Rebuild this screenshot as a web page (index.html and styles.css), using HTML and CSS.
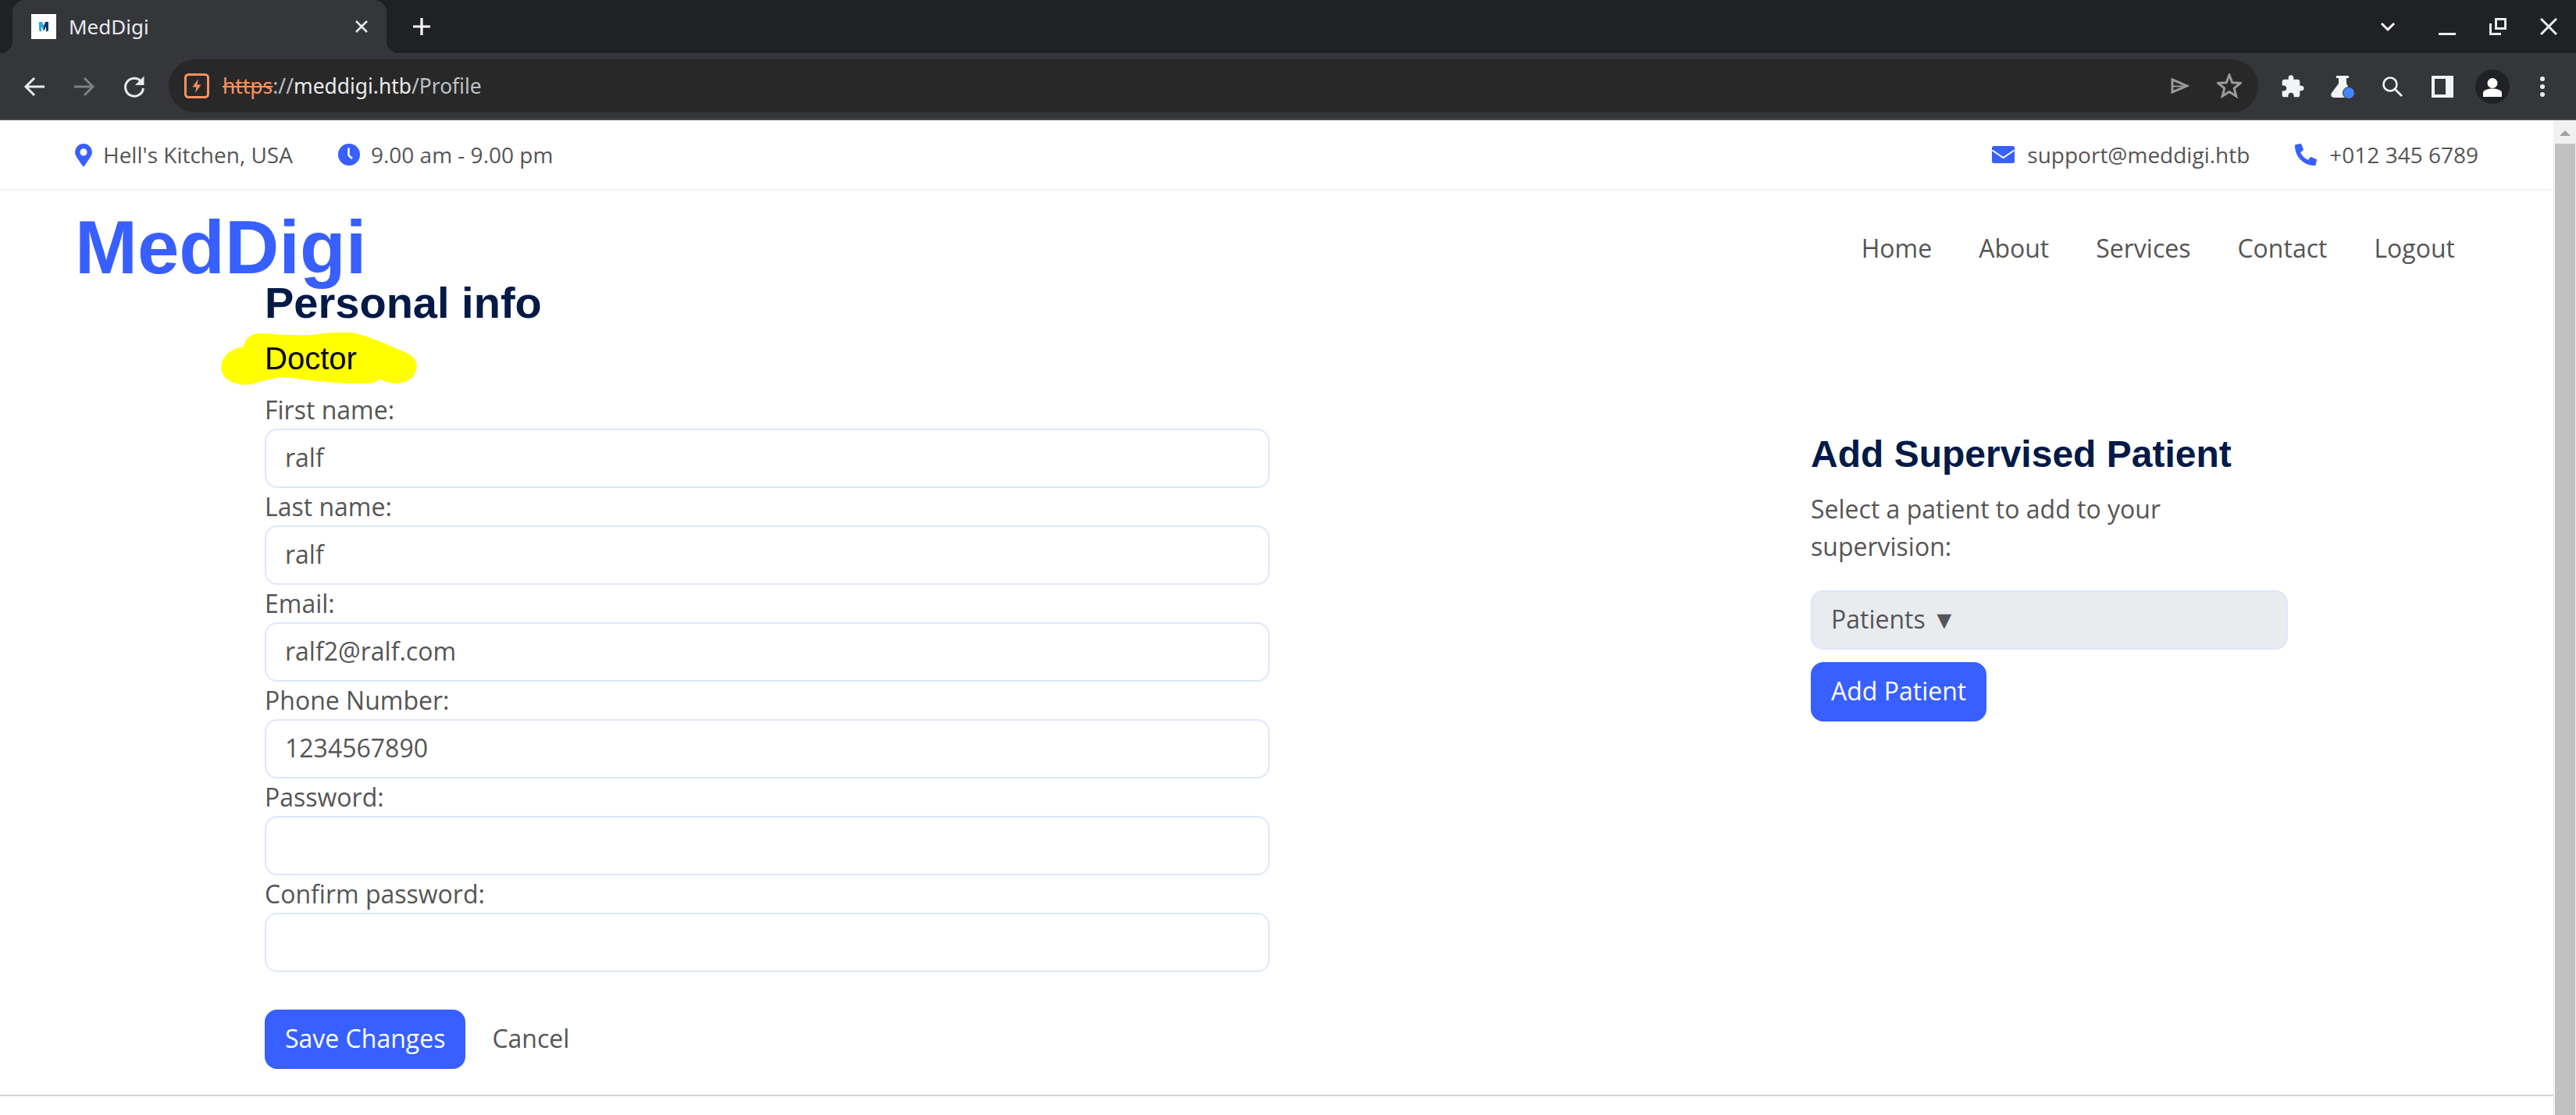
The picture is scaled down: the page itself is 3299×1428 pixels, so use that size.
FILE: index.html
```html
<!DOCTYPE html>
<html lang="en">
<head>
  <meta charset="UTF-8" />
  <title>MedDigi</title>
  <link rel="stylesheet" href="styles.css">
</head>
<body>
  <!-- BROWSER FRAME -->
  <div class="tabstrip">
    <div class="tab">
      <svg class="favicon" viewBox="0 0 32 32">
        <rect width="32" height="32" fill="#fff"/>
        <polygon points="10,10 14,10 16,15 16,22 13,16 13,23 10,21" fill="#29a9d8"/>
        <polygon points="22,10 18,10 16,15 16,22 19,16 19,23 22,21" fill="#123a6b"/>
      </svg>
      <span class="tab-title">MedDigi</span>
      <svg class="tab-close" viewBox="0 0 20 20"><path d="M3 3L17 17M17 3L3 17" stroke="#e8eaed" stroke-width="2.6"/></svg>
    </div>
    <svg class="new-tab" viewBox="0 0 24 24"><path d="M12 1V23M1 12H23" stroke="#fff" stroke-width="3.2"/></svg>
    <div class="window-btns">
      <svg class="win-chevron" viewBox="0 0 20 14"><path d="M2 2L10 10L18 2" fill="none" stroke="#fff" stroke-width="3"/></svg>
      <svg class="win-icon" viewBox="0 0 22 22"><rect y="19" width="22" height="3" fill="#e8eaed"/></svg>
      <svg class="win-icon" viewBox="0 0 22 22"><path d="M8.500 1.500H20.500V13.500H8.500Z" fill="none" stroke="#e8eaed" stroke-width="3"/><path d="M1.500 7V20.500H15" fill="none" stroke="#e8eaed" stroke-width="3"/></svg>
      <svg class="win-icon" viewBox="0 0 22 22"><path d="M1 1L21 21M21 1L1 21" stroke="#e8eaed" stroke-width="3"/></svg>
    </div>
  </div>

  <div class="toolbar">
    <div class="tool-group">
      <span class="tool"><svg viewBox="0 0 32 32"><path d="M29 16H5M16 5L5 16L16 27" fill="none" stroke="#e8eaed" stroke-width="3"/></svg></span>
      <span class="tool"><svg viewBox="0 0 32 32"><path d="M3 16H27M16 5L27 16L16 27" fill="none" stroke="#7f8083" stroke-width="3"/></svg></span>
      <span class="tool"><svg viewBox="0 0 32 32"><path d="M25 9.500A11.500 11.500 0 1 0 27.500 18" fill="none" stroke="#e8eaed" stroke-width="3"/><path d="M28.500 2.500V14H17Z" fill="#e8eaed"/></svg></span>
    </div>
    <div class="omnibox">
      <svg class="warn-icon" viewBox="0 0 32 32">
        <rect x="1.500" y="1.500" width="29" height="29" rx="4" fill="none" stroke="#f9915f" stroke-width="3"/>
        <path d="M18 7L10.500 17.500H15.500L14 25L21.500 14.500H16.500Z" fill="#f9915f"/>
      </svg>
      <span class="url"><span class="url-https">https</span><span class="url-dim">://</span><span class="url-host">meddigi.htb</span><span class="url-dim">/Profile</span></span>
      <svg class="omni-send" viewBox="0 0 24 20"><path d="M2 2L21 10L2 18Z" fill="none" stroke="#9a9a9a" stroke-width="3"/><path d="M3 10.500H16" stroke="#9a9a9a" stroke-width="2"/></svg>
      <svg class="omni-star" viewBox="0 0 32 32"><path d="M16 2L19.800 11.700L30.300 12.400L22.200 19L24.800 29.100L16 23.500L7.200 29.100L9.800 19L1.700 12.400L12.200 11.700Z" fill="none" stroke="#9a9a9a" stroke-width="3"/></svg>
    </div>
    <div class="tool-group">
      <span class="tool"><svg viewBox="0 0 24 24"><path fill="#f1f3f4" d="M20.500 11H19V7c0-1.100-.9-2-2-2h-4V3.500C13 2.120 11.880 1 10.500 1S8 2.120 8 3.500V5H4c-1.100 0-1.990.9-1.990 2v3.800H3.500c1.490 0 2.700 1.210 2.700 2.700s-1.210 2.700-2.700 2.700H2V20c0 1.100.9 2 2 2h3.800v-1.500c0-1.490 1.210-2.700 2.700-2.700 1.490 0 2.700 1.210 2.700 2.700V22H17c1.100 0 2-.9 2-2v-4h1.500c1.380 0 2.500-1.120 2.500-2.500S21.880 11 20.500 11z"/></svg></span>
      <span class="tool"><svg viewBox="0 0 32 32"><path fill="#f1f3f4" d="M8 2H24V5H21V12L28 24C29.500 27 28 30 25 30H5C2 30 .5 27 2 24L11 12V5H8Z"/><circle cx="24" cy="24" r="7.500" fill="#4285f4" stroke="#35363a" stroke-width="1"/></svg></span>
      <span class="tool"><svg viewBox="0 0 32 32"><circle cx="13" cy="13" r="8.500" fill="none" stroke="#f1f3f4" stroke-width="2.600"/><path d="M19 19L28 28" stroke="#f1f3f4" stroke-width="2.600"/></svg></span>
      <span class="tool"><svg viewBox="0 0 28 28" class="tool-panel"><path fill="#f1f3f4" fill-rule="evenodd" d="M0 0H28V28H0ZM4 4V24H18V4Z"/></svg></span>
      <span class="tool"><svg viewBox="0 0 44 44" class="tool-avatar"><circle cx="22" cy="22" r="22" fill="#202124"/><circle cx="22" cy="17.500" r="6.500" fill="#fff"/><path d="M10 35V30C10 26 17 24.500 22 24.500S34 26 34 30V35Z" fill="#fff"/></svg></span>
      <span class="tool"><svg viewBox="0 0 8 28" class="tool-dots"><circle cx="4" cy="4" r="3" fill="#e8eaed"/><circle cx="4" cy="14" r="3" fill="#e8eaed"/><circle cx="4" cy="24" r="3" fill="#e8eaed"/></svg></span>
    </div>
  </div>

  <!-- PAGE -->
  <div class="viewport">
    <div class="page">
      <div class="topbar">
        <div class="topbar-group">
          <span class="top-item">
            <svg class="ico-pin" viewBox="0 0 384 512"><path fill="#385fff" d="M172.268 501.670C26.970 291.031 0 261.528 0 192 0 85.961 85.961 0 192 0s192 85.961 192 192c0 69.528-26.970 99.031-172.268 309.670-9.535 13.774-29.930 13.773-39.464 0zM192 272c44.183 0 80-35.817 80-80s-35.817-80-80-80-80 35.817-80 80 35.817 80 80 80z"/></svg>
            Hell's Kitchen, USA
          </span>
          <span class="top-item">
            <svg class="ico-clock" viewBox="0 0 28 28"><circle cx="14" cy="14" r="14" fill="#385fff"/><path d="M13.500 5.500V15L18 19" fill="none" stroke="#fff" stroke-width="2.600"/></svg>
            9.00 am - 9.00 pm
          </span>
        </div>
        <div class="topbar-group topbar-right">
          <span class="top-item">
            <svg class="ico-mail" viewBox="0 0 29 22"><rect width="29" height="22" rx="2.500" fill="#385fff"/><path d="M0.500 5.500L14.500 15L28.500 5.500" fill="none" stroke="#fff" stroke-width="2"/></svg>
            support@meddigi.htb
          </span>
          <span class="top-item">
            <svg class="ico-phone" viewBox="0 0 512 512"><path fill="#385fff" d="M497.390 361.800l-112-48a24 24 0 0 0-28 6.900l-49.600 60.600A370.660 370.660 0 0 1 130.600 204.110l60.600-49.600a23.940 23.940 0 0 0 6.900-28l-48-112A24.160 24.160 0 0 0 122.600.61l-104 24A24 24 0 0 0 0 48c0 256.500 207.900 464 464 464a24 24 0 0 0 23.400-18.600l24-104a24.290 24.290 0 0 0-14.010-27.600z"/></svg>
            +012 345 6789
          </span>
        </div>
      </div>

      <div class="navbar">
        <div class="logo">MedDigi</div>
        <nav class="menu">
          <a>Home</a>
          <a>About</a>
          <a>Services</a>
          <a>Contact</a>
          <a>Logout</a>
        </nav>
      </div>

      <div class="content">
        <div class="form-col">
          <h3>Personal info</h3>
          <div class="role">
            <svg class="scribble" viewBox="0 0 840 270"><path fill="#ffff00" d="M40 165C42 125 75 95 125 88C130 60 150 38 185 36C250 38 330 46 390 42C440 34 500 30 545 34C620 50 700 90 755 112C780 125 795 145 790 170C785 205 755 228 705 228C680 226 665 218 650 212C635 222 625 228 600 229C530 230 460 224 400 218C350 212 310 206 270 203C240 210 210 216 185 222C165 230 145 234 125 233C75 230 40 205 40 165Z"/></svg>
            <h5>Doctor</h5>
          </div>
          <label>First name:</label>
          <input type="text" value="ralf" />
          <label>Last name:</label>
          <input type="text" value="ralf" />
          <label>Email:</label>
          <input type="text" value="ralf2@ralf.com" />
          <label>Phone Number:</label>
          <input type="text" value="1234567890" />
          <label>Password:</label>
          <input type="password" />
          <label>Confirm password:</label>
          <input type="password" />
          <div class="actions">
            <button class="btn btn-primary">Save Changes</button>
            <button class="btn btn-plain">Cancel</button>
          </div>
        </div>

        <div class="side-col">
          <h4>Add Supervised Patient</h4>
          <p>Select a patient to add to your supervision:</p>
          <div class="picker">Patients ▼</div>
          <button class="btn btn-primary">Add Patient</button>
        </div>
      </div>

      <hr class="rule" />
    </div>

    <div class="scrollbar">
      <div class="scroll-up"><span class="scroll-arrow"></span></div>
      <div class="scroll-thumb"></div>
    </div>
  </div>
</body>
</html>
```

FILE: styles.css
```css
* {
  box-sizing: border-box;
}

html, body {
  margin: 0;
  height: 1428px;
  overflow: hidden;
  background: white;
}

body {
  font-family: "Open Sans", sans-serif;
  color: #555;
}

/* browser frame */
.tabstrip {
  height: 68px;
  background: #202124;
  display: flex;
  padding-left: 16px;
}

.tab {
  position: relative;
  width: 479px;
  height: 68px;
  background: #35363a;
  border-radius: 16px 16px 0 0;
  display: flex;
  align-items: center;
  padding: 0 24px 0 24px;
}

.tab::before,
.tab::after {
  content: "";
  position: absolute;
  bottom: 0;
  width: 16px;
  height: 16px;
}

.tab::before {
  left: -16px;
  background: radial-gradient(circle at 0 0, #202124 16px, #35363a 16.5px);
}

.tab::after {
  right: -16px;
  background: radial-gradient(circle at 100% 0, #202124 16px, #35363a 16.5px);
}

.favicon {
  width: 32px;
  height: 32px;
}

.tab-title {
  margin-left: 16px;
  font-family: "Noto Sans", sans-serif;
  font-size: 26px;
  color: #e8eaed;
  flex: 1;
}

.tab-close {
  width: 20px;
  height: 20px;
  margin-right: -2px;
}

.new-tab {
  width: 24px;
  height: 24px;
  margin: 22px 0 0 33px;
}

.window-btns {
  margin-left: auto;
  display: flex;
  align-items: flex-start;
  padding: 23px 24px 0 0;
  gap: 43px;
}

.win-chevron {
  width: 20px;
  height: 14px;
  margin: 5px 12px 0 0;
}

.win-icon {
  width: 22px;
  height: 22px;
}

.toolbar {
  height: 86px;
  background: #35363a;
  border-bottom: 2px solid #4b4c50;
  display: flex;
  align-items: flex-start;
  padding: 8px 11px 0 12px;
}

.tool-group {
  display: flex;
}

.tool {
  width: 64px;
  height: 68px;
  display: flex;
  align-items: center;
  justify-content: center;
  padding-top: 2px;
}

.tool svg {
  width: 32px;
  height: 32px;
}

.tool svg.tool-panel {
  width: 28px;
  height: 28px;
}

.tool svg.tool-avatar {
  width: 44px;
  height: 44px;
}

.tool svg.tool-dots {
  width: 8px;
  height: 28px;
}

.omnibox {
  margin-left: 12px;
  width: 676px;
  flex: 1;
  height: 68px;
  background: #282828;
  border-radius: 34px;
  display: flex;
  align-items: center;
  padding: 0 21px 0 20px;
  margin-right: 12px;
}

.warn-icon {
  width: 32px;
  height: 32px;
}

.url {
  margin-left: 17px;
  font-family: "Noto Sans", sans-serif;
  font-size: 26.4px;
  flex: 1;
}

.url-https {
  color: #ff9160;
  text-decoration: line-through;
  text-decoration-thickness: 1.5px;
}

.url-dim {
  color: #bdc1c6;
}

.url-host {
  color: #e8eaed;
}

.omni-send {
  width: 24px;
  height: 20px;
}

.omni-star {
  width: 32px;
  height: 32px;
  margin-left: 35px;
}

/* page */
.viewport {
  height: 1274px;
  display: flex;
}

.page {
  flex: 1;
  overflow: hidden;
}

.topbar {
  height: 90px;
  border-bottom: 2px solid #eff3fb;
  display: flex;
  justify-content: space-between;
  padding: 0 96px;
  font-size: 28px;
}

.topbar-group {
  display: flex;
  align-items: center;
  gap: 58px;
}

.top-item {
  display: flex;
  align-items: center;
  gap: 14px;
}

.topbar-right .top-item {
  gap: 16px;
}

.ico-pin {
  width: 22px;
  height: 29px;
}

.ico-clock {
  width: 28px;
  height: 28px;
}

.ico-mail {
  width: 29px;
  height: 22px;
}

.ico-phone {
  width: 28px;
  height: 28px;
}

.navbar {
  height: 110px;
  display: flex;
  justify-content: space-between;
  align-items: flex-start;
  padding: 15px 126px 0 96px;
}

.logo {
  font-family: "Liberation Sans", sans-serif;
  font-weight: bold;
  font-size: 96px;
  line-height: 1.2;
  color: #385fff;
}

.menu {
  display: flex;
  gap: 60px;
  font-size: 32px;
  line-height: 48px;
  padding-top: 35px;
}

.content {
  display: flex;
  padding-left: 339px;
}

h3, h4, h5 {
  font-family: "Liberation Sans", sans-serif;
  margin: 0 0 16px;
  line-height: 1.2;
  color: #031a47;
}

h3 {
  font-size: 56px;
}

h4 {
  font-size: 48px;
  margin-bottom: 17px;
}

.form-col {
  width: 1287px;
  font-size: 32px;
}

.role {
  position: relative;
}

.role h5 {
  position: relative;
  font-size: 40px;
  line-height: 44px;
  margin-bottom: 20px;
  font-weight: normal;
  color: #000;
}

.scribble {
  position: absolute;
  left: -69px;
  top: -22px;
  width: 280px;
  height: 90px;
}

label {
  display: block;
  line-height: 48px;
}

input {
  display: block;
  width: 100%;
  height: 76px;
  padding: 10px 24px 14px;
  border: 2px solid #e0e6fb;
  border-radius: 16px;
  font-family: "Open Sans", sans-serif;
  font-size: 32px;
  color: #555;
  background: white;
  outline: none;
}

.actions {
  margin-top: 48px;
  display: flex;
  gap: 8px;
}

.btn {
  height: 76px;
  padding: 0 24px 3px;
  border: 2px solid transparent;
  border-radius: 16px;
  font-family: "Open Sans", sans-serif;
  font-size: 32px;
  color: #555;
  background: none;
}

.btn-primary {
  background: #385fff;
  border-color: #385fff;
  color: white;
}

.side-col {
  width: 611px;
  margin-left: 693px;
  padding-top: 199px;
  font-size: 32px;
  line-height: 48px;
}

.side-col p {
  margin: 0 0 32px;
}

.picker {
  height: 76px;
  padding: 11px 24px;
  border: 2px solid #e0e6fb;
  border-radius: 16px;
  background: #e9ecef;
  line-height: 48px;
  margin-bottom: 16px;
}

.rule {
  margin: 33px 0 0;
  border: 0;
  border-top: 2px solid #d2d2d2;
}

.scrollbar {
  width: 29px;
  background: #f1f1f1;
  padding: 0 1px 0 2px;
}

.scroll-up {
  height: 30px;
  display: flex;
  align-items: center;
  justify-content: center;
  padding-top: 2px;
}

.scroll-arrow {
  width: 0;
  height: 0;
  border-left: 7px solid transparent;
  border-right: 7px solid transparent;
  border-bottom: 7px solid #a3a3a3;
}

.scroll-thumb {
  height: 1244px;
  background: #c1c1c1;
}
```
